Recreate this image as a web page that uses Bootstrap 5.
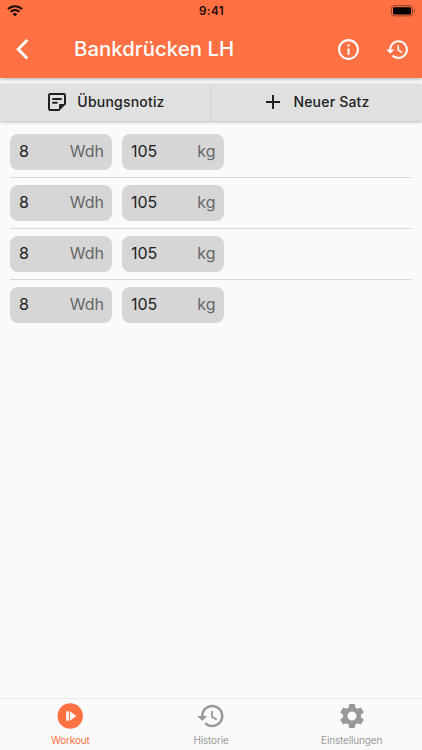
<!DOCTYPE html>
<html lang="de">
<head>
<meta charset="utf-8">
<meta name="viewport" content="width=device-width, initial-scale=1">
<title>Bankdrücken LH</title>
<link href="https://cdn.jsdelivr.net/npm/bootstrap@5.3.0/dist/css/bootstrap.min.css" rel="stylesheet">
<style>
body{font-family:Inter,"Liberation Sans",sans-serif;background:#fafafa;height:750px;overflow:hidden;color:#212121}
svg{display:block;flex:none}
.app-head{background:#ff7043;height:78px;box-shadow:0 1px 4px rgba(0,0,0,.32);z-index:2}
.status{height:21px;color:#1c0a05;padding:0 6px 0 7px}
.clock{font-size:11.6px;font-weight:600;line-height:20px;padding-top:1px;letter-spacing:.45px}
.status-side{width:40px}
.bar{height:56px;color:#fff;padding:0 12px 0 10px}
.screen-title{font-size:20.3px;font-weight:500;line-height:56px;margin-left:38px;letter-spacing:.08px}
.tool-row{margin-top:6px;height:37px;background:#e0e0e0;box-shadow:0 1px 3px rgba(0,0,0,.28)}
.tool{background:none;border:0;font-size:14px;font-weight:500;line-height:20px;color:#212121;letter-spacing:.2px;padding:0 0 0 2px}
.tool span{margin-left:10px;padding-bottom:2px}
.tool svg{margin-bottom:1px}
.tool:first-child{border-right:1px solid #cfcfcf}
.tool+.tool span{margin-left:12px}
.sets{padding:5px 10px 0}
.set-row{height:51px;gap:10px}
.set-row+.set-row{border-top:1px solid #d9d9d9}
.field{width:102px;height:36px;border-radius:8px;background:#d6d6d6;padding:0 8px 0 9px;font-size:16px;line-height:35px}
.unit{color:#666}
.kilo{padding-right:.5px}
.tabs{height:52px;border-top:1px solid #ececec;background:#fafafa}
.tab{color:#999;font-size:10px;line-height:12px;padding-top:2px;letter-spacing:-.16px}
.tab span{margin-top:3px}
.tab.on{color:#ff7043}
</style>
<script src="https://cdn.jsdelivr.net/npm/bootstrap@5.3.0/dist/js/bootstrap.bundle.min.js"></script>
</head>
<body class="d-flex flex-column">
<svg width="0" height="0" class="position-absolute"><defs>
<path id="hist" d="M13 3c-4.970 0-9 4.030-9 9H1l3.890 3.890.07.14L9 12H6c0-3.870 3.130-7 7-7s7 3.130 7 7-3.130 7-7 7c-1.930 0-3.680-.79-4.940-2.060l-1.420 1.420C8.270 19.990 10.510 21 13 21c4.970 0 9-4.030 9-9s-4.030-9-9-9zm-1 5v5l4.280 2.540.72-1.210-3.500-2.080V8H12z"/>
</defs></svg>
<header class="app-head position-relative">
  <div class="status d-flex justify-content-between align-items-center">
    <div class="status-side"><svg width="16" height="12" viewBox="0 0 16 12" fill="none" stroke="currentColor" stroke-width="2"><path d="M1 4.100a10 10 0 0 1 14 0M3.600 6.800a6.200 6.200 0 0 1 8.800 0"/><path d="M8 11.400 5.700 9a3.300 3.300 0 0 1 4.600 0z" fill="currentColor" stroke="none"/></svg></div>
    <div class="clock">9:41</div>
    <div class="status-side d-flex justify-content-end"><svg width="26" height="12" viewBox="0 0 26 12"><rect x="1.500" y=".7" width="21" height="10.200" rx="2.800" fill="none" stroke="#8d4029"/><rect x="3" y="2.200" width="18" height="7.200" rx="1.400" fill="#000"/><path d="M24 4v4c1.400-.6 1.400-3.400 0-4z" fill="#8d4029"/></svg></div>
  </div>
  <div class="bar d-flex align-items-center">
    <svg width="26" height="26" viewBox="0 0 26 26" fill="none" stroke="currentColor" stroke-width="2.900"><path d="M17.300 4 8.200 13.200l9.100 9.200"/></svg>
    <div class="screen-title me-auto">Bankdrücken LH</div>
    <svg width="25" height="25" viewBox="0 0 24 24" fill="currentColor"><path d="M11 7h2v2h-2zm0 4h2v6h-2zm1-9C6.480 2 2 6.480 2 12s4.480 10 10 10 10-4.480 10-10S17.520 2 12 2zm0 18c-4.410 0-8-3.590-8-8s3.590-8 8-8 8 3.590 8 8-3.590 8-8 8z"/></svg>
    <svg class="ms-4" width="25" height="25" viewBox="0 0 24 24" fill="currentColor"><use href="#hist"/></svg>
  </div>
</header>
<div class="tool-row d-flex">
  <button class="tool w-50 d-flex align-items-center justify-content-center"><svg width="20" height="20" viewBox="0 0 20 20" fill="none" stroke="currentColor" stroke-width="2"><path d="M12.500 18H3.200C2.400 18 2 17.500 2 16.800V3.200C2 2.400 2.400 2 3.200 2h13.600c.8 0 1.200.4 1.200 1.200v9.300"/><path d="M5.300 7h9.400M5.300 10.800h5.200"/><path d="M12 19v-5.800c0-.7.500-1.200 1.200-1.200H19z" fill="currentColor" stroke="none"/></svg><span>Übungsnotiz</span></button>
  <button class="tool w-50 d-flex align-items-center justify-content-center"><svg width="16" height="16" viewBox="0 0 16 16" stroke="currentColor" stroke-width="2"><path d="M8 1v14M1 8h14"/></svg><span>Neuer Satz</span></button>
</div>
<main class="sets flex-grow-1">
  <div class="set-row d-flex align-items-center"><div class="field d-flex justify-content-between"><span>8</span><span class="unit">Wdh</span></div><div class="field d-flex justify-content-between"><span>105</span><span class="unit kilo">kg</span></div></div>
  <div class="set-row d-flex align-items-center"><div class="field d-flex justify-content-between"><span>8</span><span class="unit">Wdh</span></div><div class="field d-flex justify-content-between"><span>105</span><span class="unit kilo">kg</span></div></div>
  <div class="set-row d-flex align-items-center"><div class="field d-flex justify-content-between"><span>8</span><span class="unit">Wdh</span></div><div class="field d-flex justify-content-between"><span>105</span><span class="unit kilo">kg</span></div></div>
  <div class="set-row d-flex align-items-center"><div class="field d-flex justify-content-between"><span>8</span><span class="unit">Wdh</span></div><div class="field d-flex justify-content-between"><span>105</span><span class="unit kilo">kg</span></div></div>
</main>
<nav class="tabs row g-0">
  <div class="tab on col-4 d-flex flex-column align-items-center"><svg width="30" height="30" viewBox="0 0 30 30"><circle cx="15.200" cy="15" r="12.700" fill="currentColor"/><path d="M11.200 10.200h2.600v9.600h-2.600zM14.800 10.200l6.500 4.800-6.500 4.800z" fill="#fff"/></svg><span>Workout</span></div>
  <div class="tab col-4 d-flex flex-column align-items-center"><svg width="30" height="30" viewBox="0 0 24 24" fill="currentColor"><use href="#hist"/></svg><span>Historie</span></div>
  <div class="tab col-4 d-flex flex-column align-items-center"><svg width="30" height="30" viewBox="0 0 24 24" fill="currentColor"><path d="M19.140 12.940c.04-.3.060-.61.060-.94 0-.32-.02-.64-.07-.94l2.030-1.580c.18-.14.23-.41.12-.61l-1.920-3.320c-.12-.22-.37-.29-.59-.22l-2.390.96c-.5-.38-1.030-.7-1.620-.94l-.36-2.540c-.04-.24-.24-.41-.48-.41h-3.840c-.24 0-.43.17-.47.410l-.36 2.540c-.59.24-1.130.57-1.620.94l-2.390-.96c-.22-.08-.47 0-.59.220L2.740 8.870c-.12.21-.08.470.12.610l2.030 1.580c-.05.300-.09.630-.09.940s.02.640.07.940l-2.030 1.580c-.18.140-.23.410-.12.610l1.920 3.320c.12.220.37.290.59.220l2.390-.96c.5.380 1.030.7 1.620.94l.36 2.540c.05.240.24.410.48.410h3.840c.24 0 .44-.17.470-.41l.36-2.540c.59-.24 1.130-.56 1.620-.94l2.390.96c.22.080.47 0 .59-.22l1.920-3.320c.12-.22.070-.47-.12-.61l-2.010-1.580zM12 15.600c-1.980 0-3.600-1.620-3.600-3.600s1.620-3.600 3.600-3.600 3.600 1.620 3.600 3.600-1.620 3.600-3.600 3.600z"/></svg><span>Einstellungen</span></div>
</nav>
</body>
</html>
